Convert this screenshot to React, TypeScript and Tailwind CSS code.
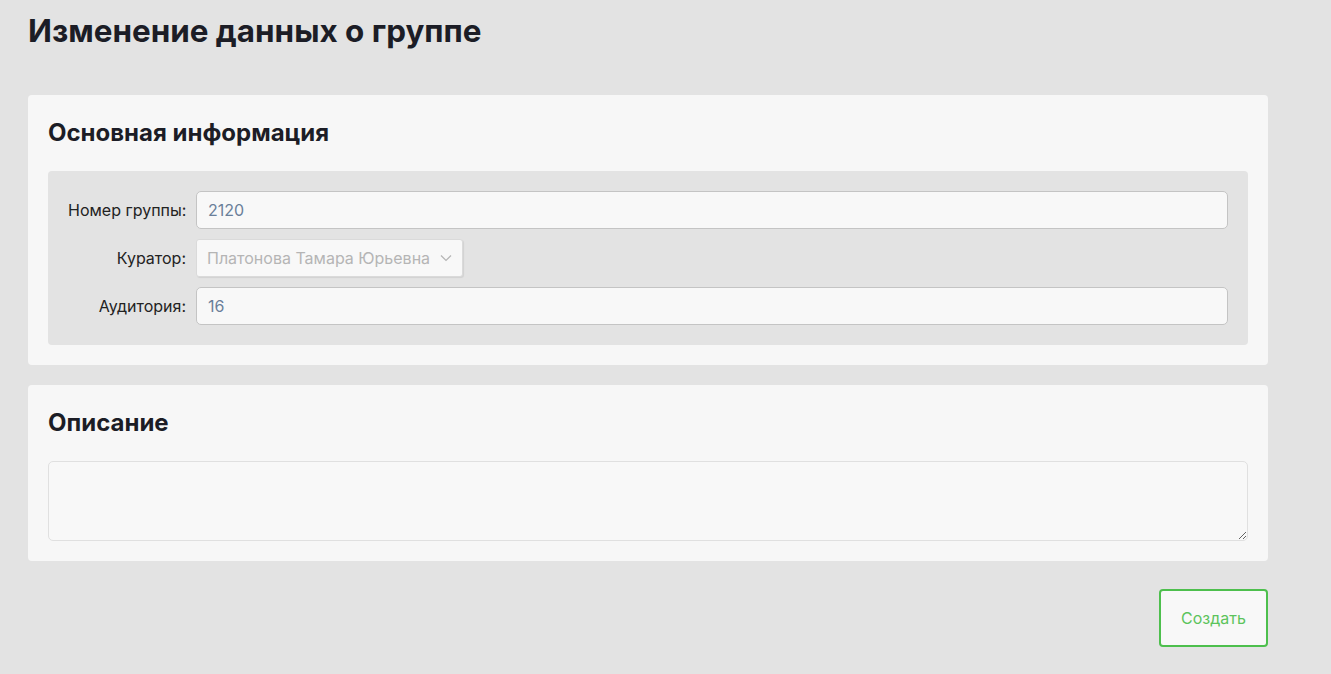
import React from "react";

const font = { fontFamily: "Inter, 'Noto Sans', sans-serif" };

function Row({ label, children }: { label: string; children: React.ReactNode }) {
  return (
    <div className="flex items-center gap-[10px]">
      <div className="w-[118px] shrink-0 text-right text-[16px] text-[#222] leading-[22px] whitespace-nowrap">{label}</div>
      {children}
    </div>
  );
}

export default function App() {
  return (
    <div style={font} className="min-h-[674px] bg-[#e3e3e3] px-[28px] pb-[27px]">
      <h1 className="pt-[12px] mb-[45px] text-[31.4px] leading-[38px] font-bold text-[#1c1d26]">
        Изменение данных о группе
      </h1>
      <div className="w-[1240px] flex flex-col gap-[20px]">
        <section className="bg-[#f7f7f7] rounded-[4px] p-[20px] flex flex-col gap-[20px]">
          <h2 className="text-[24px] leading-[36px] font-bold text-[#1c1d26]">Основная информация</h2>
          <div className="bg-[#e3e3e3] rounded-[4px] p-[20px] flex flex-col gap-[10px]">
            <Row label="Номер группы:">
              <div className="flex-1 h-[38px] rounded-[5px] border border-[#c4c4c4] bg-[#f8f8f8] px-[11px] flex items-center text-[16px] text-[#6a7f9a]">
                2120
              </div>
            </Row>
            <Row label="Куратор:">
              <div className="w-[267px] h-[38px] rounded-[3px] border border-[#dadada] bg-[#f8f8f8] shadow-[1px_1px_1px_rgba(0,0,0,0.08)] pl-[10px] pr-[10px] flex items-center justify-between text-[16px] text-[#b5b5b5]">
                <span>Платонова Тамара Юрьевна</span>
                <svg width="12" height="8" viewBox="0 0 12 8" fill="none">
                  <path d="M1 1.5 L6 6.5 L11 1.5" stroke="#b5b5b5" strokeWidth="1.2" />
                </svg>
              </div>
            </Row>
            <Row label="Аудитория:">
              <div className="flex-1 h-[38px] rounded-[5px] border border-[#c4c4c4] bg-[#f8f8f8] px-[11px] flex items-center text-[16px] text-[#6a7f9a]">
                16
              </div>
            </Row>
          </div>
        </section>
        <section className="bg-[#f7f7f7] rounded-[4px] p-[20px] flex flex-col gap-[20px]">
          <h2 className="text-[24px] leading-[36px] font-bold text-[#1c1d26]">Описание</h2>
          <textarea
            className="block w-full h-[80px] rounded-[5px] border border-[#e0e0e0] bg-[#f8f8f8] outline-none resize-y"
            defaultValue=""
          />
        </section>
        <div className="flex justify-end pt-[8px]">
          <button className="w-[109px] h-[58px] rounded-[4px] border-2 border-[#4dbf4d] bg-[#f8f8f8] text-[16px] text-[#5cc45c]">
            Создать
          </button>
        </div>
      </div>
    </div>
  );
}
